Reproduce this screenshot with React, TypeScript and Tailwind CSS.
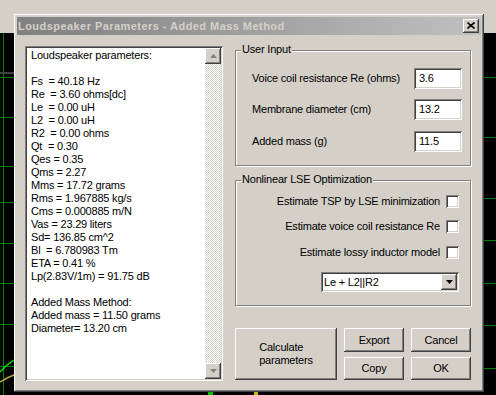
const raised =
  "shadow-[inset_-1px_-1px_0_#404040,inset_1px_1px_0_#ffffff,inset_-2px_-2px_0_#808080,inset_2px_2px_0_#d4d0c8]";
const sunken =
  "shadow-[inset_1px_1px_0_#808080,inset_-1px_-1px_0_#ffffff,inset_2px_2px_0_#404040,inset_-2px_-2px_0_#d4d0c8]";

const lines = [
  "Loudspeaker parameters:",
  "",
  "Fs  = 40.18 Hz",
  "Re  = 3.60 ohms[dc]",
  "Le  = 0.00 uH",
  "L2  = 0.00 uH",
  "R2  = 0.00 ohms",
  "Qt  = 0.30",
  "Qes = 0.35",
  "Qms = 2.27",
  "Mms = 17.72 grams",
  "Rms = 1.967885 kg/s",
  "Cms = 0.000885 m/N",
  "Vas = 23.29 liters",
  "Sd= 136.85 cm^2",
  "Bl  = 6.780983 Tm",
  "ETA = 0.41 %",
  "Lp(2.83V/1m) = 91.75 dB",
  "",
  "Added Mass Method:",
  "Added mass = 11.50 grams",
  "Diameter= 13.20 cm",
];

const Arrow = ({ up, color = "#808080" }: { up?: boolean; color?: string }) => (
  <svg width="7" height="4" viewBox="0 0 7 4">
    <polygon points={up ? "3.5,0 7,4 0,4" : "0,0 7,0 3.5,4"} fill={color} />
  </svg>
);

const Background = () => {
  const left = [77, 117, 166, 202, 243, 283, 324, 366];
  const right = [77, 137, 198, 240, 283, 325, 368];
  return (
    <svg width="496" height="362" className="block">
      <line x1="0" y1="40" x2="14" y2="40" stroke="#808080" />
      <line x1="3.5" y1="0" x2="3.5" y2="362" stroke="#008000" />
      {left.map((y) => (
        <line key={"l" + y} x1="0" y1={y - 33 + 0.5} x2="14" y2={y - 33 + 0.5} stroke="#008000" />
      ))}
      {right.map((y) => (
        <line key={"r" + y} x1="484" y1={y - 33 + 0.5} x2="496" y2={y - 33 + 0.5} stroke="#008000" />
      ))}
      <polyline points="0,339 6,333 14,327" fill="none" stroke="#00e000" strokeWidth="1.5" />
      <polyline points="0,349 7,345 14,342" fill="none" stroke="#b0b040" strokeWidth="1.5" />
      <rect x="208" y="359" width="5" height="3" fill="#00c000" />
      <rect x="254" y="359" width="4" height="3" fill="#c0c000" />
    </svg>
  );
};

const Input = ({ value }: { value: string }) => (
  <div className={`w-[48px] h-[21px] bg-white ${sunken} flex items-center pl-[5px] text-black`}>{value}</div>
);

const Check = ({ label }: { label: string }) => (
  <div className="flex items-center justify-end h-[13px] gap-[6px]">
    <span>{label}</span>
    <div className={`w-[13px] h-[13px] bg-white ${sunken}`} />
  </div>
);

const Btn = ({ children, className }: { children: React.ReactNode; className: string }) => (
  <div className={`${raised} flex items-center justify-center bg-[#d4d0c8] ${className}`}>{children}</div>
);

const Group = ({ title, className, children }: { title: string; className: string; children: React.ReactNode }) => (
  <div className={`relative border border-[#808080] shadow-[1px_1px_0_#ffffff,inset_1px_1px_0_#ffffff] ${className}`}>
    <span className="absolute left-[5px] top-[-8px] bg-[#d4d0c8] px-[1px] leading-[13px]">{title}</span>
    {children}
  </div>
);

export default function App() {
  return (
    <div className="w-[496px] h-[395px] relative overflow-hidden bg-black font-['Liberation_Sans',Arial,sans-serif] text-[11px] tracking-[-0.2px] text-black">
      <div className="h-[33px] bg-[#d4d0c8]" />
      <Background />

      <div className={`absolute left-[14px] top-[14px] w-[470px] h-[378px] bg-[#d4d0c8] p-[3px] flex flex-col ${raised}`}>
        <div className="h-[18px] bg-gradient-to-r from-[#808080] to-[#c0c0c0] flex items-center justify-between pl-[1px] pr-[2px]">
          <span className="font-bold text-[#d4d0c8] tracking-[0.45px]">Loudspeaker Parameters - Added Mass Method</span>
          <div className={`w-[16px] h-[14px] bg-[#d4d0c8] ${raised} flex items-center justify-center pb-[1px]`}>
            <svg width="8" height="7" viewBox="0 0 8 7">
              <path d="M0.5 0.5 L7.5 6.5 M7.5 0.5 L0.5 6.5" stroke="#000" strokeWidth="1.6" />
            </svg>
          </div>
        </div>

        <div className="flex-1 flex pt-[11px] pl-[8px] gap-[12px]">
          <div className={`w-[198px] h-[335px] bg-white ${sunken} p-[2px] flex`}>
            <div className="flex-1 pt-[1px] pl-[4px] leading-[13px] whitespace-pre">
              {lines.map((l, i) => (
                <div key={i} className="h-[13px]">{l}</div>
              ))}
            </div>
            <div className="w-[16px] flex flex-col bg-[repeating-conic-gradient(#d4d0c8_0%_25%,#ffffff_0%_50%)] bg-[length:2px_2px]">
              <div className={`h-[16px] bg-[#d4d0c8] ${raised} flex items-center justify-center`}>
                <Arrow up />
              </div>
              <div className="flex-1" />
              <div className={`h-[16px] bg-[#d4d0c8] ${raised} flex items-center justify-center`}>
                <Arrow />
              </div>
            </div>
          </div>

          <div className="w-[236px] flex flex-col pt-[4px]">
            <Group title="User Input" className="h-[116px] pt-[17px] pl-[16px] pr-[8px] flex flex-col">
              <div className="flex items-center justify-between h-[21px]">
                <span>Voice coil resistance Re (ohms)</span>
                <Input value="3.6" />
              </div>
              <div className="flex items-center justify-between h-[21px] mt-[10px]">
                <span>Membrane diameter (cm)</span>
                <Input value="13.2" />
              </div>
              <div className="flex items-center justify-between h-[21px] mt-[11px]">
                <span>Added mass (g)</span>
                <Input value="11.5" />
              </div>
            </Group>

            <Group title="Nonlinear LSE Optimization" className="h-[126px] mt-[14px] pt-[14px] pr-[11px] flex flex-col">
              <Check label="Estimate TSP by LSE minimization" />
              <div className="mt-[12px]">
                <Check label="Estimate voice coil resistance Re" />
              </div>
              <div className="mt-[13px]">
                <Check label="Estimate lossy inductor model" />
              </div>
              <div className={`self-end mt-[13px] w-[138px] h-[20px] bg-white ${sunken} p-[2px] flex items-center`}>
                <span className="flex-1 pl-[1px]">Le + L2||R2</span>
                <div className={`w-[16px] h-[16px] bg-[#d4d0c8] ${raised} flex items-center justify-center`}>
                  <Arrow color="#000" />
                </div>
              </div>
            </Group>

            <div className="flex gap-[7px] mt-[22px]">
              <Btn className="w-[103px] h-[52px]">
                <span className="text-left leading-[13px]">
                  Calculate
                  <br />
                  parameters
                </span>
              </Btn>
              <div className="flex flex-col gap-[5px]">
                <Btn className="w-[60px] h-[24px]">Export</Btn>
                <Btn className="w-[60px] h-[23px]">Copy</Btn>
              </div>
              <div className="flex flex-col gap-[5px]">
                <Btn className="w-[60px] h-[24px]">Cancel</Btn>
                <Btn className="w-[60px] h-[23px]">OK</Btn>
              </div>
            </div>
          </div>
        </div>
      </div>
    </div>
  );
}
